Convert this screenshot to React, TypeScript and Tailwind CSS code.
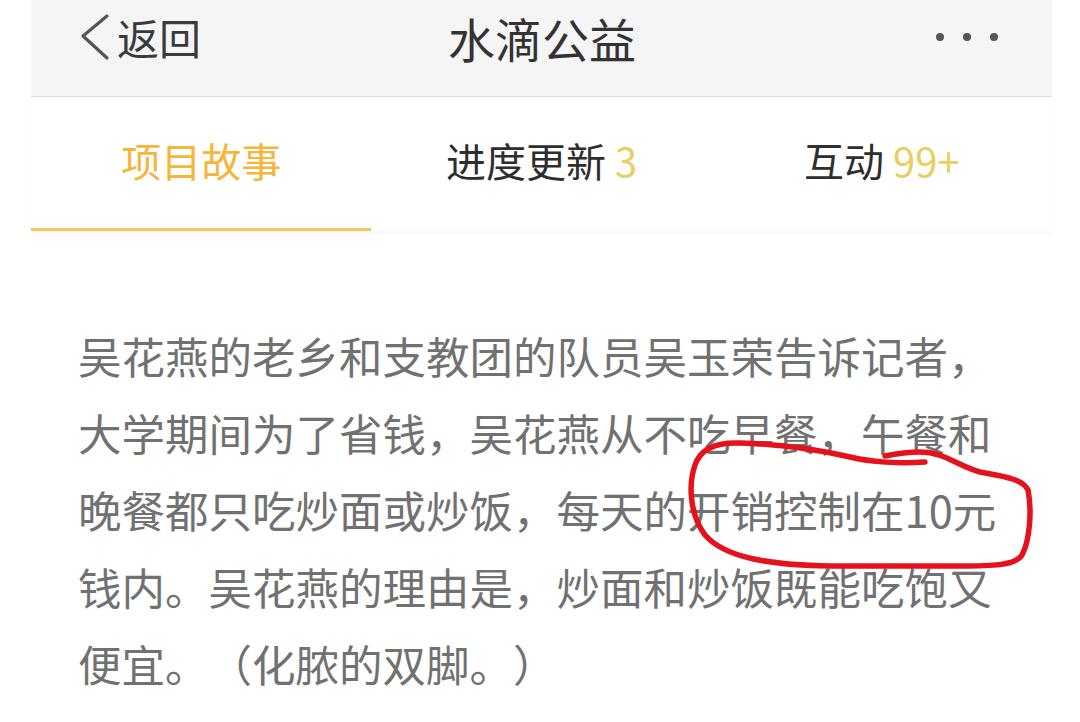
import { ReactNode } from "react";

const font = { fontFamily: '"Noto Sans CJK SC", "Noto Sans", sans-serif' };

const story =
  "吴花燕的老乡和支教团的队员吴玉荣告诉记者，大学期间为了省钱，吴花燕从不吃早餐，午餐和晚餐都只吃炒面或炒饭，每天的开销控制在10元钱内。吴花燕的理由是，炒面和炒饭既能吃饱又便宜。（化脓的双脚。）";

export default function App() {
  return (
    <div className="relative w-[1080px] h-[722px] overflow-hidden bg-white" style={font}>
      <div className="ml-[31px] w-[1021px]">
        {/* ---------- nav bar ---------- */}
        <header className="h-[97px] bg-[#f5f5f5] border-b border-[#dedede]">
          <div className="h-[74px] grid grid-cols-[1fr_auto_1fr] items-center pl-[49px] pr-[54px]">
            <button className="flex items-center text-[42px] leading-none text-[#3a3a3a] justify-self-start">
              <svg width="30" height="50" viewBox="0 0 30 50" className="mr-[7px]">
                <path d="M27 4 L3 24 L27 46" fill="none" stroke="#555" strokeWidth="3.2" strokeLinecap="round" strokeLinejoin="round" />
              </svg>
              返回
            </button>
            <h1 className="text-[47px] leading-none text-[#333] ml-[6px]">水滴公益</h1>
            <div className="flex items-center gap-[19px] justify-self-end">
              <span className="w-[8px] h-[8px] rounded-full bg-[#555]" />
              <span className="w-[8px] h-[8px] rounded-full bg-[#555]" />
              <span className="w-[8px] h-[8px] rounded-full bg-[#555]" />
            </div>
          </div>
        </header>

        {/* ---------- tabs ---------- */}
        <nav className="grid grid-cols-3 h-[134px] shadow-[0_3px_4px_rgba(0,0,0,0.03)]">
          <Tab active>项目故事</Tab>
          <Tab>
            进度更新 <span className="text-[#e8cf62]">3</span>
          </Tab>
          <Tab>
            互动 <span className="text-[#e8cf62]">99+</span>
          </Tab>
        </nav>

        {/* ---------- body ---------- */}
        <p className="pt-[86px] pl-[47px] w-[980px] text-[43.5px] leading-[77px] text-[#717171] [text-spacing-trim:space-all]">
          {story}
        </p>
      </div>

      {/* hand-drawn red mark over the text */}
      <svg className="absolute inset-0 pointer-events-none" width="1080" height="722" viewBox="0 0 1080 722">
        <path
          d="M 925 462 C 900 464, 870 462, 850 457 C 820 450, 780 444, 740 443 C 715 442, 700 450, 695 465 C 688 485, 690 515, 705 535 C 725 558, 770 565, 830 566 L 960 566 C 990 566, 1015 566, 1022 555 C 1030 540, 1032 510, 1028 490 C 1022 478, 1000 476, 980 472 C 955 465, 945 452, 920 452 C 905 452, 895 454, 885 456"
          fill="none"
          stroke="#e5121c"
          strokeWidth="5.5"
          strokeLinecap="round"
          strokeLinejoin="round"
        />
      </svg>
    </div>
  );
}

function Tab({ children, active }: { children: ReactNode; active?: boolean }) {
  return (
    <div
      className={
        active
          ? "flex items-center justify-center text-[40px] leading-none text-[#f5b63a] border-b-[3px] border-[#f7c462]"
          : "flex items-center justify-center text-[40px] leading-none text-[#2e2e2e] border-b-[3px] border-transparent"
      }
    >
      <span className="-mt-[6px]">{children}</span>
    </div>
  );
}
